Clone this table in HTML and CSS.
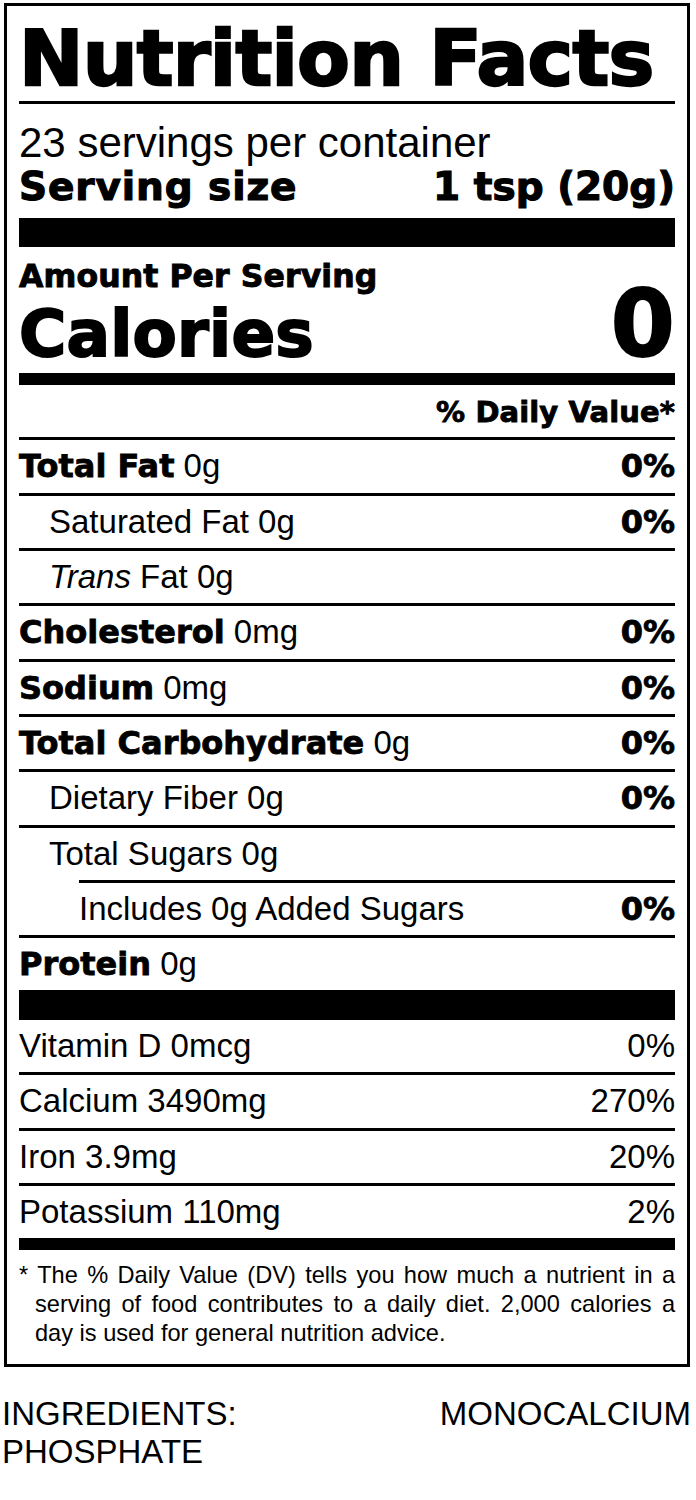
FILE: index.html
```html
<!DOCTYPE html>
<html lang="en">
<head>
<meta charset="utf-8">
<title>Nutrition Facts</title>
<link rel="stylesheet" href="styles.css">
</head>
<body>
<div class="page">
  <section class="label">
    <h1 class="title">Nutrition Facts</h1>
    <p class="servings">23 servings per container</p>
    <div class="serving-size"><span class="ss-label">Serving size</span><span>1 tsp (20g)</span></div>
    <div class="bar bar-xl"></div>
    <p class="amount">Amount Per Serving</p>
    <div class="calories"><span>Calories</span><span class="cal-value">0</span></div>
    <div class="bar bar-md"></div>
    <p class="dv-head">% Daily Value*</p>
    <div class="rows">
      <div class="row"><span class="name"><b>Total Fat</b> 0g</span><span class="dv"><b>0%</b></span></div>
      <div class="row sub"><span class="name">Saturated Fat 0g</span><span class="dv"><b>0%</b></span></div>
      <div class="row sub"><span class="name"><i>Trans</i> Fat 0g</span></div>
      <div class="row"><span class="name"><b>Cholesterol</b> 0mg</span><span class="dv"><b>0%</b></span></div>
      <div class="row"><span class="name"><b>Sodium</b> 0mg</span><span class="dv"><b>0%</b></span></div>
      <div class="row"><span class="name"><b>Total Carbohydrate</b> 0g</span><span class="dv"><b>0%</b></span></div>
      <div class="row sub"><span class="name">Dietary Fiber 0g</span><span class="dv"><b>0%</b></span></div>
      <div class="row sub"><span class="name">Total Sugars 0g</span></div>
      <div class="row sub2"><span class="name">Includes 0g Added Sugars</span><span class="dv"><b>0%</b></span></div>
      <div class="row"><span class="name"><b>Protein</b> 0g</span></div>
    </div>
    <div class="bar bar-xl2"></div>
    <div class="rows">
      <div class="row first"><span class="name">Vitamin D 0mcg</span><span class="dv">0%</span></div>
      <div class="row"><span class="name">Calcium 3490mg</span><span class="dv">270%</span></div>
      <div class="row"><span class="name">Iron 3.9mg</span><span class="dv">20%</span></div>
      <div class="row"><span class="name">Potassium 110mg</span><span class="dv">2%</span></div>
    </div>
    <div class="bar bar-md bar-end"></div>
    <p class="foot">* The % Daily Value (DV) tells you how much a nutrient in a serving of food contributes to a daily diet. 2,000 calories a day is used for general nutrition advice.</p>
  </section>
  <p class="ingredients">INGREDIENTS: MONOCALCIUM PHOSPHATE</p>
</div>
</body>
</html>
```
FILE: styles.css
```css
html, body {
  margin: 0;
  padding: 0;
  background: #fff;
  color: #000;
}
body {
  font-family: "Liberation Sans", Arial, sans-serif;
}
.page {
  padding: 3px 0 0 4px;
}
.label {
  width: 686px;
  box-sizing: border-box;
  border: 3px solid #000;
  padding: 0 12px 15.7px;
}
.title,
.serving-size,
.amount,
.calories,
.dv-head,
.row b {
  font-family: "DejaVu Sans", "Liberation Sans", sans-serif;
  font-weight: 700;
  -webkit-text-stroke: 0.03em #000;
}
.title {
  margin: 13.5px 0 0;
  padding-bottom: 4.5px;
  border-bottom: 3px solid #000;
  font-size: 77px;
  line-height: 77px;
  letter-spacing: -0.8px;
  white-space: nowrap;
}
.servings {
  margin: 16.6px 0 0;
  font-size: 42px;
  line-height: 44px;
}
.serving-size {
  display: flex;
  justify-content: space-between;
  font-size: 39px;
  line-height: 43px;
}
.ss-label {
  letter-spacing: 0.9px;
}
.bar {
  background: #000;
}
.bar-xl {
  height: 29px;
  margin-top: 10.4px;
}
.amount {
  margin: 11.1px 0 0;
  font-size: 31.5px;
  line-height: 36px;
  letter-spacing: 0.1px;
}
.calories {
  display: flex;
  justify-content: space-between;
  align-items: baseline;
  margin-top: 3.1px;
  font-size: 64.5px;
  line-height: 66px;
  letter-spacing: 0.2px;
}
.cal-value {
  font-size: 92px;
  line-height: 56px;
}
.bar-md {
  height: 12px;
  margin-top: 6.3px;
}
.dv-head {
  margin: 10.5px 0 0;
  text-align: right;
  font-size: 29px;
  line-height: 33px;
  letter-spacing: 0.1px;
}
.rows {
  margin-top: 8.5px;
}
.bar-xl2 {
  height: 30px;
}
.bar-xl2 + .rows {
  margin-top: 0;
}
.row {
  display: flex;
  justify-content: space-between;
  border-top: 3px solid #000;
  font-size: 33px;
  line-height: 48.8px;
  padding-top: 2px;
  padding-bottom: 1.5px;
}
.row.first {
  border-top: 0;
  padding-top: 1.5px;
}
.row b {
  font-size: 32px;
  line-height: 1;
  -webkit-text-stroke: 0.025em #000;
}
.row.sub .name {
  padding-left: 30px;
}
.row.sub2 {
  margin-left: 60px;
}
.row i {
  font-style: italic;
}
.bar-end {
  margin-top: 0;
}
.foot {
  margin: 10.8px 0 0;
  font-size: 23.6px;
  line-height: 29px;
  text-align: justify;
  padding-left: 16px;
  text-indent: -16px;
}
.ingredients {
  margin: 28.3px 0 0 -2px;
  width: 689px;
  font-size: 33px;
  line-height: 38.3px;
  text-align: justify;
}
```
